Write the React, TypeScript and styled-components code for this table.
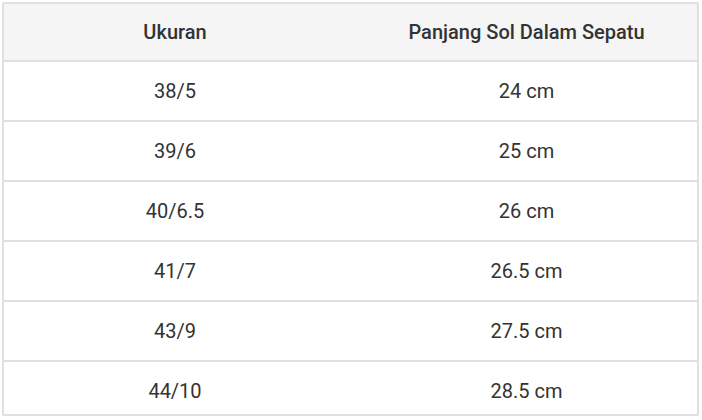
import styled, { createGlobalStyle } from 'styled-components';

const GlobalStyle = createGlobalStyle`
    html, body {
        margin: 0;
        padding: 0;
        background: #ffffff;
    }
    body {
        font-family: Roboto, "Liberation Sans", Arial, sans-serif;
    }
`;

const Page = styled.div`
    padding: 2px 3px 0 2px;
`;

const Table = styled.div`
    width: 697px;
    height: 414px;
    box-sizing: border-box;
    border: 2px solid #e0e0e0;
    border-radius: 2px;
    overflow: hidden;
`;

const Row = styled.div<{ $head?: boolean }>`
    display: grid;
    grid-template-columns: 342px 351px;
    height: ${(p) => (p.$head ? "56px" : "58px")};
    background: ${(p) => (p.$head ? "#f5f5f5" : "#ffffff")};
    border-bottom: 2px solid #e0e0e0;
`;

const Cell = styled.div<{ $head?: boolean; $right?: boolean }>`
    display: flex;
    align-items: center;
    justify-content: center;
    padding-left: ${(p) => (p.$right ? "10px" : "0")};
    font-size: 20px;
    font-weight: ${(p) => (p.$head ? 500 : 400)};
    color: #333333;
`;

const sizes = [
    ["38/5", "24 cm"],
    ["39/6", "25 cm"],
    ["40/6.5", "26 cm"],
    ["41/7", "26.5 cm"],
    ["43/9", "27.5 cm"],
    ["44/10", "28.5 cm"],
];

const App = () => {
    return (
        <Page>
            <GlobalStyle />
            <Table>
                <Row $head>
                    <Cell $head>Ukuran</Cell>
                    <Cell $head $right>Panjang Sol Dalam Sepatu</Cell>
                </Row>
                {sizes.map(([size, length]) => (
                    <Row key={size}>
                        <Cell>{size}</Cell>
                        <Cell $right>{length}</Cell>
                    </Row>
                ))}
            </Table>
        </Page>
    );
};

export default App;
